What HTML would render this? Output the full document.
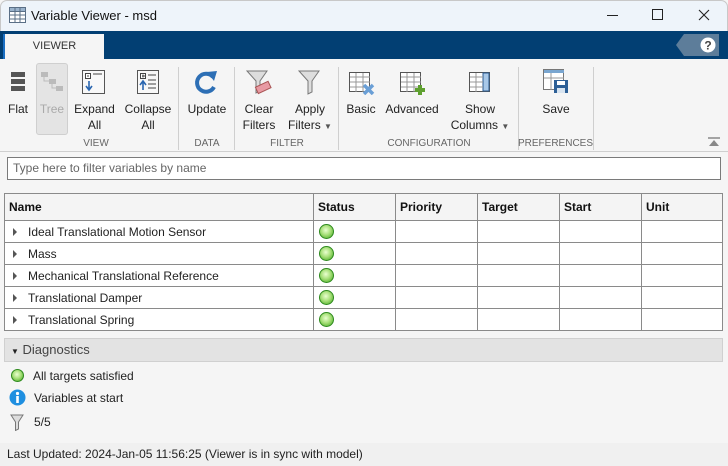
<!DOCTYPE html>
<html><head><meta charset="utf-8">
<style>
*{box-sizing:border-box;margin:0;padding:0}
body{width:728px;height:466px;overflow:hidden;background:#f5f5f5;font-family:"Liberation Sans",sans-serif;font-size:12px;color:#222;position:relative}
.abs{position:absolute}
.title{left:0;top:0;width:728px;height:31px;background:#eef4fa;border:1px solid #c8c8c8;border-bottom:none;border-radius:7px 7px 0 0}
.band{left:0;top:31px;width:728px;height:28px;background:#023f73}
.tab{left:3px;top:34px;width:101px;height:25px;background:#f5f5f5;border-left:2px solid #1a6fc4;color:#333;font-size:11px;text-align:center;line-height:25px}
.ribbon{left:0;top:59px;width:728px;height:93px;background:#f5f5f5;border-bottom:1px solid #cfcfcf}
.lbl{text-align:center;font-size:12px;line-height:16px;color:#222;white-space:nowrap}
.grp{font-size:10px;color:#666;text-align:center;top:138px;white-space:nowrap}
.sep{top:67px;width:1px;height:83px;background:#cfcfcf}
table{border-collapse:collapse;position:absolute;left:4px;top:193px;width:719px;background:#fff}
td,th{border:1px solid #8a8a8a;height:22px;font-size:12px;padding:0 0 0 4px;text-align:left;white-space:nowrap}
th{height:27px;background:#f4f4f4;font-weight:bold;color:#111}
.dot{display:inline-block;width:15px;height:15px;border-radius:50%;background:radial-gradient(circle at 45% 40%,#eaffd0 0,#a8e07a 45%,#4fae2a 90%);border:1.5px solid #2e8a1e;vertical-align:middle;margin-left:1px}
.arr{display:inline-block;width:0;height:0;border-left:4px solid #555;border-top:4px solid transparent;border-bottom:4px solid transparent;margin:0 11px 0 8px;vertical-align:middle}
</style></head><body>
<div class="abs title"></div>
<svg class="abs" style="left:9px;top:7px" width="17" height="16"><rect x="0.5" y="0.5" width="16" height="15" fill="#fff" stroke="#5a6f86"/><rect x="0.5" y="0.5" width="16" height="4" fill="#9ab3cc" stroke="#5a6f86"/><path d="M6 1v15M11 1v15M1 8h16M1 12h16" stroke="#5a6f86"/></svg>
<div class="abs" style="left:31px;top:8px;font-size:13px;color:#111">Variable Viewer - msd</div>
<div class="abs" style="left:607px;top:15px;width:11px;height:1px;background:#222"></div>
<div class="abs" style="left:652px;top:9px;width:11px;height:11px;border:1px solid #222"></div>
<svg class="abs" style="left:698px;top:9px" width="12" height="12"><path d="M1 1L11 11M11 1L1 11" stroke="#222" stroke-width="1.1"/></svg>
<div class="abs band"></div>
<div class="abs tab">VIEWER</div>
<svg class="abs" style="left:674px;top:34px" width="46" height="22"><path d="M10 0H45V22H10L2 11Z" fill="#5d7d9a"/><circle cx="34" cy="11" r="7.5" fill="#fff"/><text x="34" y="15.5" font-family="Liberation Sans" font-size="12" font-weight="bold" text-anchor="middle" fill="#444">?</text></svg>
<div class="abs ribbon"></div>
<svg class="abs" style="left:11px;top:72px" width="14" height="20"><rect x="0" y="0" width="14" height="5" fill="#555"/><rect x="0" y="7" width="14" height="5" fill="#555"/><rect x="0" y="14" width="14" height="5" fill="#555"/></svg>
<div class="abs lbl" style="left:5px;top:101px;width:26px">Flat</div>
<div class="abs" style="left:36px;top:63px;width:32px;height:72px;background:#e4e4e4;border:1px solid #cfcfcf;border-radius:3px"></div>
<svg class="abs" style="left:41px;top:72px" width="22" height="20"><rect x="0" y="0" width="7" height="5" fill="#bbb"/><rect x="8" y="7" width="7" height="5" fill="#bbb"/><rect x="15" y="14" width="7" height="5" fill="#bbb"/><path d="M3 5v4h5M11 12v4h4" stroke="#bbb" fill="none"/></svg>
<div class="abs lbl" style="left:36px;top:101px;width:32px;color:#aaa">Tree</div>
<svg class="abs" style="left:82px;top:70px" width="23" height="24"><rect x="0.5" y="0.5" width="22" height="23" fill="#f8f8f8" stroke="#555"/><rect x="3.5" y="3.5" width="5" height="5" fill="#fff" stroke="#444"/><path d="M5 6h2M11 4h9" stroke="#444"/><path d="M7 11v8M4 16l3 4 3-4" stroke="#2a66b0" stroke-width="1.6" fill="none"/></svg>
<div class="abs lbl" style="left:72px;top:101px;width:45px">Expand<br>All</div>
<svg class="abs" style="left:137px;top:70px" width="22" height="24"><rect x="0.5" y="0.5" width="21" height="23" fill="#f8f8f8" stroke="#555"/><rect x="3.5" y="3.5" width="5" height="5" fill="#fff" stroke="#444"/><path d="M5 6h3M6 4.5v3M11 5h8M11 10h8M11 14h8M11 18h8" stroke="#444"/><path d="M6 20v-8M3 15l3-4 3 4" stroke="#2a66b0" stroke-width="1.6" fill="none"/></svg>
<div class="abs lbl" style="left:124px;top:101px;width:48px">Collapse<br>All</div>
<div class="abs sep" style="left:178px"></div>
<svg class="abs" style="left:193px;top:69px" width="26" height="26"><path d="M20 8A9 9 0 1 0 21 18" stroke="#2d6fb5" stroke-width="4" fill="none"/><path d="M14 3l10-1-3 10z" fill="#2d6fb5"/></svg>
<div class="abs lbl" style="left:184px;top:101px;width:46px">Update</div>
<div class="abs sep" style="left:234px"></div>
<svg class="abs" style="left:246px;top:70px" width="26" height="25"><path d="M1 1h20l-7 10v10l-4 2V11z" fill="#ddd" stroke="#777"/><rect x="10" y="14" width="14" height="7" transform="rotate(-25 17 17)" fill="#e89aa3" stroke="#a55"/></svg>
<div class="abs lbl" style="left:240px;top:101px;width:38px">Clear<br>Filters</div>
<svg class="abs" style="left:298px;top:70px" width="22" height="25"><path d="M1 1h20l-7 10v11l-4 2V11z" fill="#ddd" stroke="#777"/></svg>
<div class="abs lbl" style="left:285px;top:101px;width:50px">Apply<br>Filters&nbsp;<span style="font-size:8px;color:#555">▼</span></div>
<div class="abs sep" style="left:338px"></div>
<svg class="abs" style="left:349px;top:72px" width="26" height="23"><rect x="0.5" y="0.5" width="20" height="19" fill="#fff" stroke="#555"/><path d="M1 5h20M1 10h20M1 15h20M7 1v19M14 1v19" stroke="#999"/><path d="M15 13l9 9M24 13l-9 9" stroke="#6a9fd6" stroke-width="3.5"/></svg>
<div class="abs lbl" style="left:343px;top:101px;width:36px">Basic</div>
<svg class="abs" style="left:400px;top:72px" width="26" height="23"><rect x="0.5" y="0.5" width="20" height="19" fill="#fff" stroke="#555"/><path d="M1 5h20M1 10h20M1 15h20M7 1v19M14 1v19" stroke="#999"/><path d="M20 13v10M15 18h10" stroke="#5fa030" stroke-width="4"/></svg>
<div class="abs lbl" style="left:384px;top:101px;width:56px">Advanced</div>
<svg class="abs" style="left:469px;top:72px" width="21" height="20"><rect x="0.5" y="0.5" width="20" height="19" fill="#fff" stroke="#555"/><rect x="14" y="1" width="6" height="18" fill="#a8c8e8" stroke="#2a5a90"/><path d="M1 5h13M1 10h13M1 15h13M7 1v19" stroke="#999"/></svg>
<div class="abs lbl" style="left:447px;top:101px;width:66px">Show<br>Columns&nbsp;<span style="font-size:8px;color:#555">▼</span></div>
<div class="abs sep" style="left:518px"></div>
<svg class="abs" style="left:543px;top:69px" width="26" height="25"><rect x="0.5" y="0.5" width="20" height="20" fill="#fff" stroke="#777"/><rect x="1" y="1" width="20" height="3" fill="#7aa6d0"/><path d="M1 9h20M8 4v17" stroke="#999"/><rect x="11" y="11" width="14" height="13" fill="#2d5f96"/><rect x="14" y="12" width="8" height="4" fill="#fff"/><rect x="14" y="19" width="8" height="5" fill="#d8e4f0"/></svg>
<div class="abs lbl" style="left:536px;top:101px;width:40px">Save</div>
<div class="abs sep" style="left:593px"></div>
<div class="abs grp" style="left:68px;width:56px">VIEW</div>
<div class="abs grp" style="left:180px;width:54px">DATA</div>
<div class="abs grp" style="left:236px;width:102px">FILTER</div>
<div class="abs grp" style="left:340px;width:178px">CONFIGURATION</div>
<div class="abs grp" style="left:518px;width:75px">PREFERENCES</div>
<svg class="abs" style="left:708px;top:137px" width="12" height="10"><path d="M0 1h12" stroke="#888" stroke-width="1.5"/><path d="M1 9l5-6 5 6z" fill="#888"/></svg>
<div class="abs" style="left:7px;top:157px;width:714px;height:23px;background:#fff;border:1px solid #7a7a7a;font-size:12px;color:#666;line-height:21px;padding-left:5px">Type here to filter variables by name</div>
<table>
<tr><th style="width:309px">Name</th><th style="width:82px">Status</th><th style="width:82px">Priority</th><th style="width:82px">Target</th><th style="width:82px">Start</th><th>Unit</th></tr>
<tr><td style="padding:0"><span class="arr"></span>Ideal Translational Motion Sensor</td><td><span class="dot"></span></td><td></td><td></td><td></td><td></td></tr>
<tr><td style="padding:0"><span class="arr"></span>Mass</td><td><span class="dot"></span></td><td></td><td></td><td></td><td></td></tr>
<tr><td style="padding:0"><span class="arr"></span>Mechanical Translational Reference</td><td><span class="dot"></span></td><td></td><td></td><td></td><td></td></tr>
<tr><td style="padding:0"><span class="arr"></span>Translational Damper</td><td><span class="dot"></span></td><td></td><td></td><td></td><td></td></tr>
<tr><td style="padding:0"><span class="arr"></span>Translational Spring</td><td><span class="dot"></span></td><td></td><td></td><td></td><td></td></tr>
</table>
<div class="abs" style="left:4px;top:338px;width:719px;height:24px;background:#e3e3e3;border:1px solid #d0d0d0;font-size:13px;color:#444;line-height:22px;padding-left:6px"><span style="font-size:8px;color:#222">▼</span>&nbsp;Diagnostics</div>
<span class="abs dot" style="left:10px;top:369px;width:13px;height:13px"></span>
<div class="abs" style="left:33px;top:369px;font-size:12px">All targets satisfied</div>
<svg class="abs" style="left:9px;top:389px" width="17" height="17"><circle cx="8.5" cy="8.5" r="8" fill="#1f8fe0"/><circle cx="8.5" cy="4.5" r="1.6" fill="#fff"/><rect x="7.2" y="7" width="2.6" height="7" fill="#fff"/></svg>
<div class="abs" style="left:34px;top:391px;font-size:12px">Variables at start</div>
<svg class="abs" style="left:10px;top:414px" width="14" height="17"><path d="M1 1h12l-4.5 7v7l-3 1.5V8z" fill="#ddd" stroke="#777"/></svg>
<div class="abs" style="left:34px;top:415px;font-size:12px">5/5</div>
<div class="abs" style="left:0;top:443px;width:728px;height:23px;background:#f0f0f0;font-size:12px;line-height:23px;padding-left:7px">Last Updated: 2024-Jan-05 11:56:25 (Viewer is in sync with model)</div>
</body></html>
